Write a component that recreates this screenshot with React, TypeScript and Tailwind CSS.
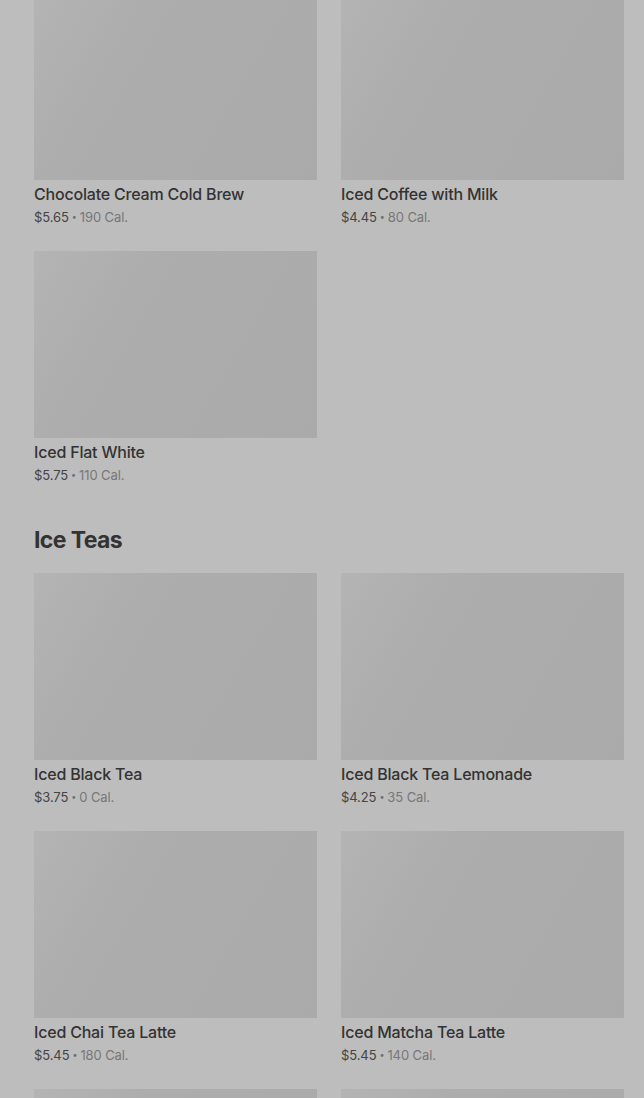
import React from "react";

type Item = { name: string; price: string; cal: string };

const coffee: Item[] = [
  { name: "Chocolate Cream Cold Brew", price: "$5.65", cal: "190 Cal." },
  { name: "Iced Coffee with Milk", price: "$4.45", cal: "80 Cal." },
  { name: "Iced Flat White", price: "$5.75", cal: "110 Cal." },
];

const teas: Item[] = [
  { name: "Iced Black Tea", price: "$3.75", cal: "0 Cal." },
  { name: "Iced Black Tea Lemonade", price: "$4.25", cal: "35 Cal." },
  { name: "Iced Chai Tea Latte", price: "$5.45", cal: "180 Cal." },
  { name: "Iced Matcha Tea Latte", price: "$5.45", cal: "140 Cal." },
  { name: "", price: "", cal: "" },
  { name: "", price: "", cal: "" },
];

function Card({ item }: { item: Item }) {
  return (
    <div className="flex flex-col">
      <div className="h-[187px] w-full bg-[linear-gradient(120deg,#b4b4b4_0%,#adadad_30%,#aaaaaa_100%)]" />
      {item.name && (
        <>
          <div className="mt-[4px] h-[20px] text-[16px] leading-[20px] font-medium text-[#333333] tracking-[-0.2px]">
            {item.name}
          </div>
          <div className="mt-[3px] h-[20px] flex items-center text-[13px] leading-[20px] text-[#444444] tracking-[-0.1px]">
            <span>{item.price}</span>
            <span className="text-[#6f6f6f] text-[9px] leading-[20px] px-[3px]">•</span>
            <span className="text-[#777777]">{item.cal}</span>
          </div>
        </>
      )}
    </div>
  );
}

export default function App() {
  return (
    <div
      className="w-[644px] h-[1098px] overflow-hidden bg-[#bdbdbd]"
      style={{ fontFamily: "Inter, 'Noto Sans', sans-serif" }}
    >
      <div className="pl-[34px] pr-[20px] mt-[-7px]">
        <div className="grid grid-cols-2 gap-x-[24px] gap-y-[24px]">
          {coffee.map((it, i) => (
            <Card key={i} item={it} />
          ))}
        </div>
        <h2 className="mt-[39px] h-[32px] text-[23px] leading-[32px] font-bold text-[#333333] tracking-[-0.6px]">
          Ice Teas
        </h2>
        <div className="mt-[17px] grid grid-cols-2 gap-x-[24px] gap-y-[24px]">
          {teas.map((it, i) => (
            <Card key={i} item={it} />
          ))}
        </div>
      </div>
    </div>
  );
}
